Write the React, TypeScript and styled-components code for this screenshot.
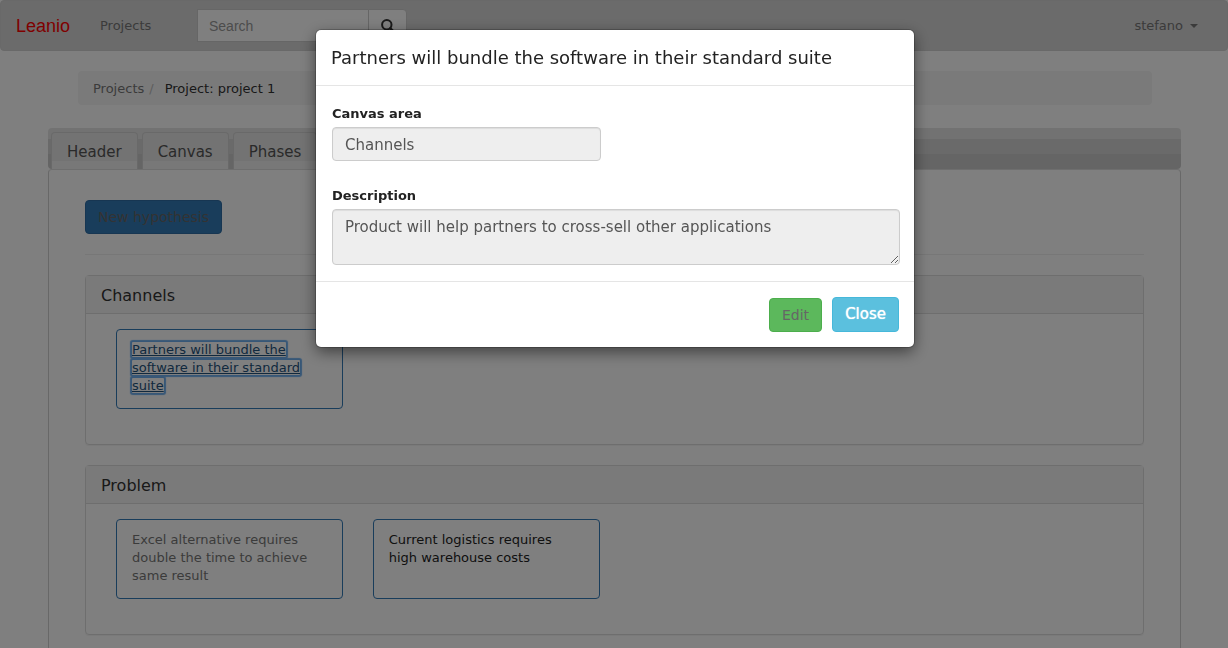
import React from "react";
import styled, { createGlobalStyle } from "styled-components";

const GlobalStyle = createGlobalStyle`
  *, *::before, *::after { box-sizing: border-box; }
  body {
    margin: 0;
    overflow: hidden;
    background: #fff;
    color: #333;
    font-family: Verdana, "DejaVu Sans", sans-serif;
    font-size: 13px;
    line-height: 18px;
  }
  a { color: inherit; text-decoration: none; }
  button, input, textarea { font-family: inherit; }
`;

const Navbar = styled.nav`
  display: flex;
  align-items: center;
  height: 51px;
  padding: 0 29px 0 15px;
  border: 1px solid #d2d2d2;
  border-radius: 4px;
  background: #d6d6d6;
  color: #777;
`;

const Brand = styled.a`
  width: 84px;
  color: #f00;
  font: 18px/20px "Liberation Sans", Arial, sans-serif;
`;

const NavLink = styled.a`
  width: 97px;
`;

const SearchForm = styled.form`
  display: flex;
  width: 210px;
  height: 33px;
  margin-right: auto;
`;

const SearchInput = styled.input`
  flex: 1;
  min-width: 0;
  padding: 0 11px;
  border: 1px solid #ccc;
  border-right: 0;
  background: #fff;
  font: 14px/20px "Liberation Sans", Arial, sans-serif;
  &::placeholder { color: #999; opacity: 1; }
`;

const SearchButton = styled.button`
  width: 39px;
  padding: 0;
  border: 1px solid #ccc;
  border-radius: 0 4px 4px 0;
  background: #fff;
  color: #333;
  svg { display: block; margin: 0 auto; }
`;

const UserMenu = styled.button`
  display: flex;
  align-items: center;
  gap: 7px;
  padding: 0;
  border: 0;
  background: none;
  color: #777;
  font-size: 13px;
  line-height: 18px;
`;

const Caret = styled.span`
  border: 4px solid transparent;
  border-top-color: currentColor;
  border-bottom: 0;
`;

const Page = styled.main`
  padding: 20px 47px 0 48px;
`;

const Breadcrumb = styled.ol`
  display: flex;
  margin: 0 29px 23px 30px;
  padding: 9px 15px 7px;
  border-radius: 4px;
  background: #f5f5f5;
  list-style: none;
  li + li::before {
    content: "/";
    padding: 0 11px 0 5px;
    color: #bbb;
  }
`;

const Crumb = styled.li<{ $current?: boolean }>`
  color: ${(p) => (p.$current ? "#333" : "#777")};
`;

const TabBar = styled.div`
  display: flex;
  align-items: flex-end;
  gap: 4px;
  height: 41px;
  padding: 0 3px;
  border-radius: 4px;
  background: linear-gradient(#e5e5e5 11px, #d5d5d5 11px, #d5d5d5 26px, #cacaca 26px);
`;

const Tab = styled.a`
  height: 37px;
  padding: 9px 15px 6px;
  border: 1px solid #d3d3d3;
  border-bottom: 0;
  border-radius: 4px 4px 0 0;
  background: linear-gradient(#e6e6e6 28px, #f0f0f0 28px);
  color: #555;
  font-size: 15px;
  line-height: 21px;
`;

const TabPanel = styled.section`
  padding: 30px 36px;
  border: 1px solid #d0d0d0;
  border-top-color: #ddd;
  border-radius: 4px;
`;

const Rule = styled.hr`
  height: 1px;
  margin: 20px 0;
  border: 0;
  background: #eee;
`;

const Button = styled.button<{ $tone: "primary" | "success" | "info" }>`
  padding: 6px 12px;
  border: 1px solid ${(p) => ({ primary: "#2e6da4", success: "#4cae4c", info: "#46b8da" })[p.$tone]};
  border-radius: 4px;
  background: ${(p) => ({ primary: "#337ab7", success: "#5cb85c", info: "#5bc0de" })[p.$tone]};
  color: ${(p) => (p.$tone === "info" ? "#fff" : "#666")};
  font-size: ${(p) => (p.$tone === "info" ? 15 : 14)}px;
  line-height: ${(p) => (p.$tone === "info" ? 21 : 20)}px;
  text-shadow: ${(p) => (p.$tone === "info" ? "0 0 1px #fff" : "none")};
`;

const Panel = styled.section`
  margin-bottom: 20px;
  border: 1px solid #ddd;
  border-radius: 4px;
  box-shadow: 0 1px 1px rgba(0, 0, 0, 0.05);
`;

const PanelTitle = styled.h3`
  margin: 0;
  padding: 10px 15px 8px;
  border-bottom: 1px solid #ddd;
  background: #f5f5f5;
  font-size: 16px;
  line-height: 19px;
  font-weight: 400;
`;

const Cards = styled.div`
  display: grid;
  grid-template-columns: repeat(4, 1fr);
  gap: 30px;
  padding: 15px 30px 35px;
`;

const Card = styled.article<{ $dark?: boolean }>`
  min-height: 80px;
  padding: 11px 15px;
  border: 1px solid #337ab7;
  border-radius: 4px;
  color: ${(p) => (p.$dark ? "#222" : "#777")};
`;

const FocusedLink = styled.a`
  border-radius: 1px;
  box-decoration-break: clone;
  -webkit-box-decoration-break: clone;
  box-shadow: 0 0 1px 2px #6fafee;
  color: #23527c;
  text-decoration: underline;
`;

const Overlay = styled.div`
  position: fixed;
  inset: 0;
  display: flex;
  align-items: flex-start;
  justify-content: center;
  padding: 30px 0 30px 2px;
  background: rgba(0, 0, 0, 0.5);
`;

const Dialog = styled.div`
  width: 598px;
  max-width: 100%;
  border-radius: 5px;
  background: #fff;
  box-shadow: 0 0 0 1px rgba(0, 0, 0, 0.2), 0 5px 15px rgba(0, 0, 0, 0.5);
`;

const DialogTitle = styled.h2`
  margin: 0;
  padding: 15px;
  border-bottom: 1px solid #e5e5e5;
  color: #222;
  font-size: 18px;
  line-height: 25px;
  font-weight: 400;
`;

const DialogBody = styled.div`
  display: flex;
  flex-direction: column;
  padding: 19px 14px 16px 16px;
`;

const Label = styled.label`
  margin-bottom: 4px;
  color: #222;
  font-weight: 700;
`;

const Input = styled.input`
  width: 269px;
  height: 34px;
  margin-bottom: 26px;
  padding: 7px 12px 6px;
  border: 1px solid #ccc;
  border-radius: 4px;
  background: #eee;
  color: #555;
  font-size: 15px;
  box-shadow: inset 0 1px 1px rgba(0, 0, 0, 0.075);
`;

const TextArea = styled.textarea`
  height: 56px;
  padding: 6px 12px;
  border: 1px solid #ccc;
  border-radius: 4px;
  background: #eee;
  color: #555;
  font-size: 15px;
  line-height: 22px;
  box-shadow: inset 0 1px 1px rgba(0, 0, 0, 0.075);
`;

const DialogFooter = styled.div`
  display: flex;
  align-items: flex-end;
  justify-content: flex-end;
  gap: 10px;
  padding: 15px;
  border-top: 1px solid #e5e5e5;
`;

export default function App() {
  return (
    <>
      <GlobalStyle />
      <Navbar>
        <Brand href="#">Leanio</Brand>
        <NavLink href="#projects">Projects</NavLink>
        <SearchForm role="search">
          <SearchInput type="text" placeholder="Search" aria-label="Search" />
          <SearchButton type="submit" aria-label="Submit search">
            <svg width="14" height="14" viewBox="0 0 14 14" fill="none" stroke="currentColor">
              <circle cx="5.8" cy="5.8" r="4.7" strokeWidth="2" />
              <path d="M9.3 9.3 12.8 12.8" strokeWidth="2.6" strokeLinecap="round" />
            </svg>
          </SearchButton>
        </SearchForm>
        <UserMenu type="button">
          stefano <Caret />
        </UserMenu>
      </Navbar>

      <Page>
        <Breadcrumb>
          <Crumb><a href="#projects">Projects</a></Crumb>
          <Crumb $current>Project: project 1</Crumb>
        </Breadcrumb>
        <TabBar>
          <Tab href="#header">Header</Tab>
          <Tab href="#canvas">Canvas</Tab>
          <Tab href="#phases">Phases</Tab>
        </TabBar>
        <TabPanel>
          <Button type="button" $tone="primary">New hypothesis</Button>
          <Rule />
          <Panel>
            <PanelTitle>Channels</PanelTitle>
            <Cards>
              <Card>
                <FocusedLink href="#partners">
                  Partners will bundle the software in their standard suite
                </FocusedLink>
              </Card>
            </Cards>
          </Panel>
          <Panel>
            <PanelTitle>Problem</PanelTitle>
            <Cards>
              <Card><a href="#excel">Excel alternative requires double the time to achieve same result</a></Card>
              <Card $dark><a href="#logistics">Current logistics requires high warehouse costs</a></Card>
            </Cards>
          </Panel>
        </TabPanel>
      </Page>

      <Overlay>
        <Dialog role="dialog" aria-modal="true" aria-labelledby="dialog-title">
          <DialogTitle id="dialog-title">Partners will bundle the software in their standard suite</DialogTitle>
          <DialogBody>
            <Label htmlFor="area">Canvas area</Label>
            <Input id="area" type="text" readOnly value="Channels" />
            <Label htmlFor="description">Description</Label>
            <TextArea id="description" readOnly value="Product will help partners to cross-sell other applications" />
          </DialogBody>
          <DialogFooter>
            <Button type="button" $tone="success">Edit</Button>
            <Button type="button" $tone="info">Close</Button>
          </DialogFooter>
        </Dialog>
      </Overlay>
    </>
  );
}
